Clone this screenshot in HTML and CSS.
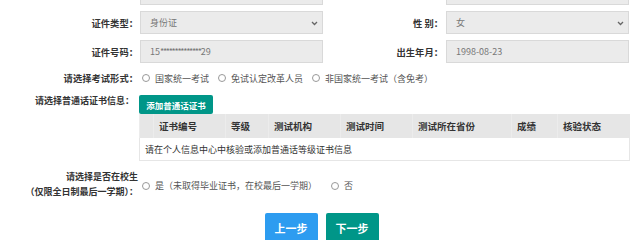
FILE: index.html
```html
<!doctype html>
<html lang="zh-CN">

<head>
  <title>报名信息</title>
  <meta charset="utf-8" />
  <link rel="stylesheet" href="styles.css">
</head>

<body>
  <form class="form">
    <div class="row row-top">
      <span class="lbl"></span>
      <div class="box"></div>
      <span class="lbl"></span>
      <div class="box"></div>
    </div>
    <div class="row">
      <label class="lbl">证件类型：</label>
      <div class="box select">身份证
        <svg class="chev" width="7" height="5" viewBox="0 0 7 5"><path d="M1 1 L3.5 3.5 L6 1" fill="none" stroke="#666" stroke-width="1.3"/></svg>
      </div>
      <label class="lbl">性 别：</label>
      <div class="box select">女
        <svg class="chev" width="7" height="5" viewBox="0 0 7 5"><path d="M1 1 L3.5 3.5 L6 1" fill="none" stroke="#666" stroke-width="1.3"/></svg>
      </div>
    </div>
    <div class="row">
      <label class="lbl">证件号码：</label>
      <div class="box">15<span class="stars">**************</span>29</div>
      <label class="lbl">出生年月：</label>
      <div class="box">1998-08-23</div>
    </div>

    <div class="line radio-row">
      <label class="lbl">请选择考试形式：</label>
      <div class="radios">
        <span class="radio"><i></i>国家统一考试</span>
        <span class="radio"><i></i>免试认定改革人员</span>
        <span class="radio"><i></i>非国家统一考试（含免考）</span>
      </div>
    </div>

    <div class="line cert">
      <label class="lbl lbl-cert">请选择普通话证书信息：</label>
      <div class="cert-box">
        <button type="button" class="btn-add">添加普通话证书</button>
        <table class="cert-table">
          <colgroup>
            <col style="width:14px"><col style="width:72px"><col style="width:43px"><col style="width:72px">
            <col style="width:72px"><col style="width:99px"><col style="width:46px"><col style="width:72px">
          </colgroup>
          <thead>
            <tr>
              <th></th><th>证书编号</th><th>等级</th><th>测试机构</th>
              <th>测试时间</th><th>测试所在省份</th><th>成绩</th><th>核验状态</th>
            </tr>
          </thead>
          <tbody>
            <tr><td colspan="8">请在个人信息中心中核验或添加普通话等级证书信息</td></tr>
          </tbody>
        </table>
      </div>
    </div>

    <div class="line school">
      <label class="lbl lbl-two">请选择是否在校生<br>（仅限全日制最后一学期）：</label>
      <div class="radios">
        <span class="radio"><i></i>是（未取得毕业证书，在校最后一学期）</span>
        <span class="radio"><i></i>否</span>
      </div>
    </div>

    <div class="actions">
      <button type="button" class="btn prev">上一步</button>
      <button type="button" class="btn next">下一步</button>
    </div>
  </form>
</body>

</html>
```

FILE: styles.css
```css
html {
  font-family: "Noto Sans CJK SC", "Liberation Sans", sans-serif;
  font-size: 9px;
  color: #333;
}

body {
  margin: 0;
  width: 643px;
  height: 240px;
  overflow: hidden;
  background: #fff;
}

.form {
  margin-top: -18px;
}

.row {
  display: grid;
  grid-template-columns: 140px 183px 123px 183px;
  height: 23px;
  margin-bottom: 6px;
}

.lbl {
  font-weight: bold;
  font-size: 9.3px;
  color: #333;
  text-align: right;
  padding-right: 2px;
  align-self: center;
  white-space: nowrap;
}

.row .lbl:nth-of-type(2) {
  padding-right: 3px;
}

.box {
  position: relative;
  box-sizing: border-box;
  height: 23px;
  line-height: 21px;
  padding-left: 9px;
  border: 1px solid #d9d9d9;
  background: #ebebeb;
  color: #777;
  font-size: 9px;
}

.stars {
  letter-spacing: -1.3px;
}

.chev {
  position: absolute;
  right: 4px;
  top: 9px;
}

.line {
  display: grid;
  grid-template-columns: 140px 489px;
}

.radio-row {
  height: 18px;
  align-items: center;
}

.radios {
  display: flex;
  align-items: center;
  color: #555;
}

.radio {
  display: inline-flex;
  align-items: center;
  margin-right: 7px;
}

.radio i {
  display: inline-block;
  width: 6px;
  height: 6px;
  border: 1px solid #999;
  border-radius: 50%;
  margin: 0 5px 0 2px;
}

.cert {
  margin-top: 8px;
}

.lbl-cert {
  align-self: start;
  font-size: 9px;
  padding-right: 6px;
  line-height: 12px;
}

.btn-add {
  display: block;
  height: 19px;
  width: 74px;
  padding: 0;
  border: none;
  border-radius: 2px;
  background: #009688;
  color: #fff;
  font: bold 8.5px "Noto Sans CJK SC", sans-serif;
  margin-left: -1px;
}

.cert-table {
  width: 490px;
  margin-left: -1px;
  border-collapse: collapse;
  table-layout: fixed;
}

.cert-table th {
  height: 23px;
  background: #e6e6e6;
  border-left: 1px solid #ececec;
  text-align: left;
  padding: 0 0 0 5px;
  font-size: 9.5px;
  font-weight: 600;
  color: #333;
}

.cert-table td {
  height: 22px;
  padding: 0 0 0 5px;
  border: 1px solid #e6e6e6;
  color: #333;
}

.school {
  margin-top: 8px;
  align-items: center;
}

.lbl-two {
  font-size: 9px;
  line-height: 15px;
}

.school .radios {
  margin-top: 3px;
}

.school .radio {
  margin-right: 12px;
}

.actions {
  display: flex;
  justify-content: center;
  gap: 8px;
  margin-top: 14px;
}

.btn {
  width: 53px;
  height: 30px;
  border: none;
  border-radius: 2px;
  color: #fff;
  font: bold 11px "Noto Sans CJK SC", sans-serif;
  padding: 0;
}

.prev {
  background: #2d9cf0;
}

.next {
  background: #009688;
}
```
